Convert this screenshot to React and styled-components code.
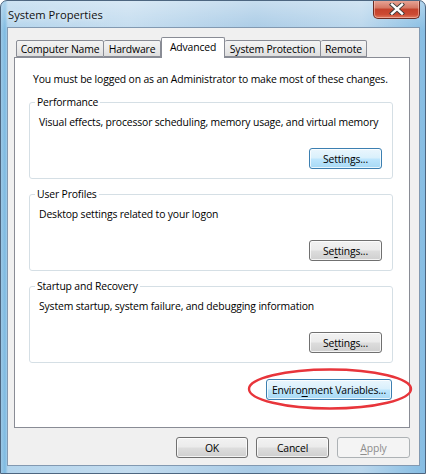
import React from "react";
import styled, { createGlobalStyle } from "styled-components";

const Global = createGlobalStyle`
  html, body { margin: 0; padding: 0; }
  body {
    font-family: "Open Sans", "Noto Sans", sans-serif;
    font-size: 10.4px;
    letter-spacing: -0.15px;
    color: #000;
  }
`;

const Window = styled.div`
  width: 426px;
  height: 474px;
  box-sizing: border-box;
  display: flex;
  flex-direction: column;
  border: 1px solid #4d6680;
  border-radius: 7px 7px 0 0;
  background:
    linear-gradient(to bottom, rgba(255, 255, 255, 0.35), rgba(255, 255, 255, 0) 30px),
    linear-gradient(to right, #9cc8e6 0, #7ebbe2 4px, #b3d4ec 7px, #c3dcef 30%, #a9cbe6 60%, #b9d6ec 85%, #86bde3 100%);
  overflow: hidden;
`;

const TitleBar = styled.div`
  height: 26px;
  display: flex;
  justify-content: space-between;
  align-items: flex-start;
  padding-left: 7px;
  flex-shrink: 0;
`;

const Title = styled.div`
  margin-top: 6px;
  font-size: 11.2px;
  letter-spacing: 0;
  color: #111;
  text-shadow: 0 0 6px rgba(255, 255, 255, 0.9);
`;

const CloseButton = styled.div`
  width: 47px;
  height: 19px;
  margin-right: 5px;
  margin-top: -1px;
  box-sizing: border-box;
  border: 1px solid #6b2b22;
  border-top: none;
  border-radius: 0 0 5px 5px;
  background: linear-gradient(to bottom, #e9a99b 0%, #d47662 45%, #c4412b 50%, #cc4a32 80%, #e07a5f 100%);
  box-shadow: inset 0 0 0 1px rgba(255, 210, 200, 0.5);
  display: flex;
  align-items: center;
  justify-content: center;
`;

const Client = styled.div`
  flex: 1;
  margin: 0 5px 7px 6px;
  border: 1px solid #8299b1;
  background: #f0f0f0;
  padding: 9px 9px 7px 6px;
  display: flex;
  flex-direction: column;
`;

const TabStrip = styled.div`
  display: flex;
  align-items: flex-end;
  height: 20px;
  padding-left: 2px;
  position: relative;
  z-index: 1;
`;

const Tab = styled.div`
  width: ${(p) => p.w}px;
  height: ${(p) => (p.active ? 21 : 17)}px;
  margin-bottom: ${(p) => (p.active ? -1 : 0)}px;
  box-sizing: border-box;
  border: 1px solid #898c95;
  border-bottom: ${(p) => (p.active ? "none" : "1px solid #898c95")};
  border-left-width: ${(p) => (p.first || p.active ? 1 : 0)}px;
  border-radius: 2px 2px 0 0;
  background: ${(p) =>
    p.active ? "#fff" : "linear-gradient(to bottom, #f3f3f3 0%, #ebebeb 50%, #dedede 100%)"};
  display: flex;
  justify-content: center;
  align-items: center;
  padding-bottom: ${(p) => (p.active ? 3 : 0)}px;
  white-space: nowrap;
`;

const Panel = styled.div`
  height: 371px;
  box-sizing: border-box;
  border: 1px solid #898c95;
  background: #fff;
  padding: 13px 16px 0 14px;
  display: flex;
  flex-direction: column;
  gap: 7px;
`;

const Note = styled.div`
  line-height: 16px;
  margin-left: 4px;
  white-space: nowrap;
`;

const Group = styled.fieldset`
  margin: 0;
  padding: 4px 10px 9px 8px;
  border: 1px solid #d5dfe5;
  border-radius: 3px;
  display: flex;
  flex-direction: column;
  min-width: 0;
`;

const Legend = styled.legend`
  padding: 0 2px;
  margin-left: -3px;
  line-height: 16px;
`;

const Desc = styled.div`
  line-height: 16px;
  margin-left: 1px;
  white-space: nowrap;
`;

const ButtonRow = styled.div`
  display: flex;
  justify-content: flex-end;
  margin-top: ${(p) => p.top || 0}px;
  margin-right: ${(p) => p.right || 0}px;
  gap: 8px;
`;

const Button = styled.div`
  position: relative;
  width: ${(p) => p.w}px;
  height: 21px;
  box-sizing: border-box;
  border: 1px solid ${(p) => (p.hot ? "#3c7fb1" : p.disabled ? "#adb2b5" : "#707070")};
  border-radius: 3px;
  background: ${(p) =>
    p.hot
      ? "linear-gradient(to bottom, #eaf6fd 0%, #d9f0fc 48%, #bee6fd 52%, #a7d9f5 100%)"
      : p.disabled
      ? "#f4f4f4"
      : "linear-gradient(to bottom, #f2f2f2 0%, #ebebeb 48%, #dddddd 52%, #cfcfcf 100%)"};
  box-shadow: inset 0 0 0 1px ${(p) => (p.disabled ? "#f4f4f4" : "rgba(255, 255, 255, 0.75)")};
  color: ${(p) => (p.disabled ? "#8d8d8d" : "#000")};
  display: flex;
  align-items: center;
  justify-content: center;
  white-space: nowrap;
`;

const Key = styled.span`
  text-decoration: underline;
  text-underline-offset: 2px;
`;

const Circle = styled.svg`
  position: absolute;
  left: -19px;
  top: -12px;
  overflow: visible;
  pointer-events: none;
`;

const Footer = styled.div`
  display: flex;
  justify-content: flex-end;
  gap: 8px;
  margin-top: 9px;
`;

const tabs = [
  ["Computer Name", 88],
  ["Hardware", 57],
  ["Advanced", 64],
  ["System Protection", 96],
  ["Remote", 46],
];

const SettingsGroup = ({ title, text, hot, plain }) => (
  <Group>
    <Legend>{title}</Legend>
    <Desc>{text}</Desc>
    <ButtonRow top={18}>
      <Button w={73} hot={hot}>
        {plain ? "Settings..." : <span>Se<Key>t</Key>tings...</span>}
      </Button>
    </ButtonRow>
  </Group>
);

export default function App() {
  return (
    <Window>
      <Global />
      <TitleBar>
        <Title>System Properties</Title>
        <CloseButton>
          <svg width="16" height="12" viewBox="0 0 16 12">
            <path d="M3 1.5 L13 10.5 M13 1.5 L3 10.5" stroke="#3b3b3b" strokeWidth="4.2" strokeLinecap="square" />
            <path d="M3 1.5 L13 10.5 M13 1.5 L3 10.5" stroke="#fff" strokeWidth="2.4" strokeLinecap="square" />
          </svg>
        </CloseButton>
      </TitleBar>
      <Client>
        <TabStrip>
          {tabs.map(([label, w], i) => (
            <Tab key={label} w={w} first={i === 0} active={label === "Advanced"}>
              {label}
            </Tab>
          ))}
        </TabStrip>
        <Panel>
          <Note>You must be logged on as an Administrator to make most of these changes.</Note>
          <SettingsGroup
            title="Performance"
            text="Visual effects, processor scheduling, memory usage, and virtual memory"
            hot
            plain
          />
          <SettingsGroup title="User Profiles" text="Desktop settings related to your logon" />
          <SettingsGroup
            title="Startup and Recovery"
            text="System startup, system failure, and debugging information"
          />
          <ButtonRow top={9} right={1}>
            <Button w={126} hot>
              <span>
                Enviro<Key>n</Key>ment Variables...
              </span>
              <Circle width="164" height="42" viewBox="0 0 164 42">
                <ellipse cx="82" cy="21" rx="81" ry="19.5" fill="none" stroke="#e8353b" strokeWidth="2.4" />
              </Circle>
            </Button>
          </ButtonRow>
        </Panel>
        <Footer>
          <Button w={72}>OK</Button>
          <Button w={73}>Cancel</Button>
          <Button w={73} disabled>
            <span>
              <Key>A</Key>pply
            </span>
          </Button>
        </Footer>
      </Client>
    </Window>
  );
}
